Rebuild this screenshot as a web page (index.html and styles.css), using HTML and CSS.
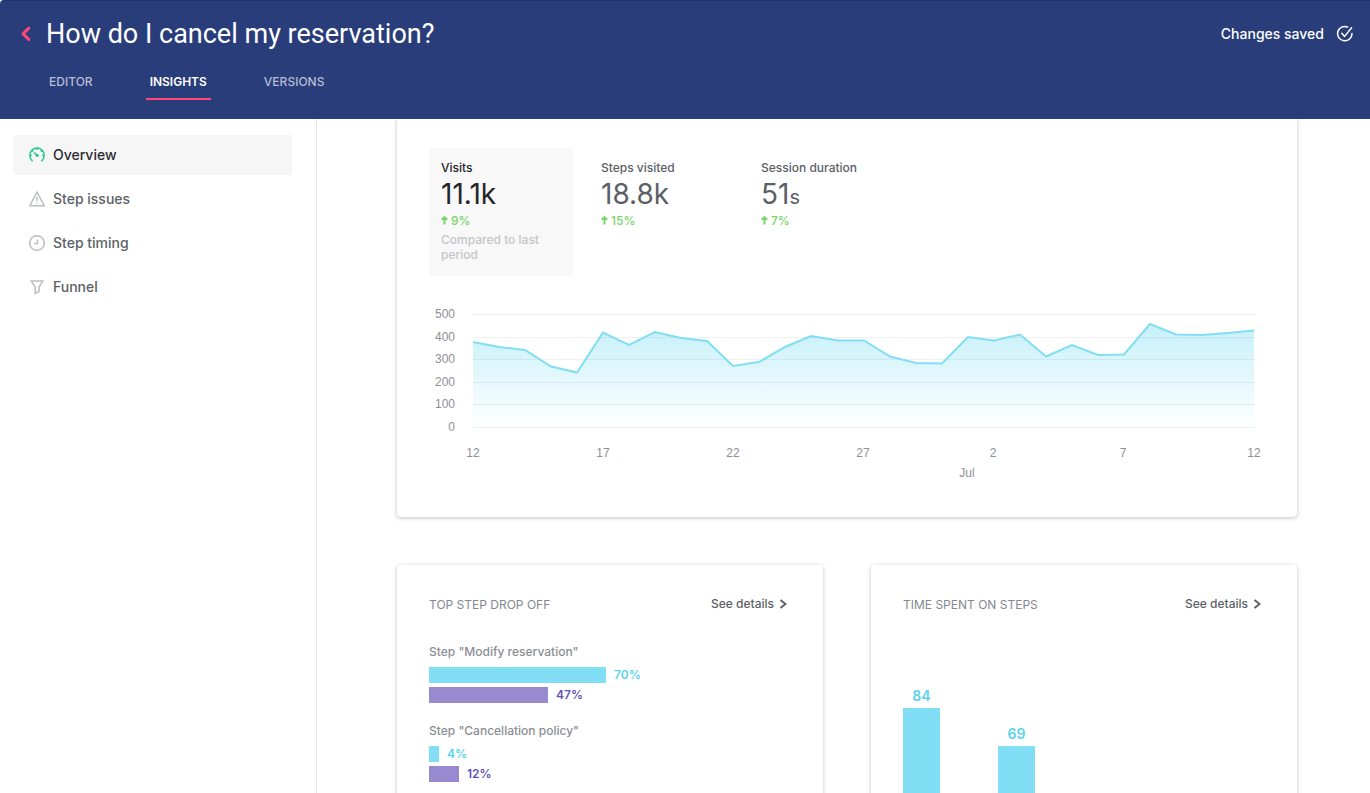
FILE: index.html
```html
<!DOCTYPE html>
<html lang="en">
<head>
<meta charset="utf-8">
<title>How do I cancel my reservation?</title>
<link rel="stylesheet" href="styles.css">
</head>
<body>
<header class="header">
  <div class="title-row">
    <a class="back" href="#" aria-label="Back">
      <svg width="12" height="18" viewBox="0 0 12 18"><path d="M8.800 3.200 3 8.800l5.800 5.600"/></svg>
    </a>
    <h1 class="title">How do I cancel my reservation?</h1>
    <div class="status">
      <span>Changes saved</span>
      <svg width="18" height="18" viewBox="0 0 18 18"><path d="M11.600 2A7.200 7.200 0 1 0 16 8.600"/><path d="M5.800 8.200 8.600 11.400 15.600 2.800"/></svg>
    </div>
  </div>
  <nav class="tabs">
    <a class="tab" href="#">EDITOR</a>
    <a class="tab tab-active" href="#">INSIGHTS</a>
    <a class="tab" href="#">VERSIONS</a>
  </nav>
</header>
<div class="body">
  <nav class="sidebar">
    <a class="item item-active" href="#">
      <svg width="16" height="16" viewBox="0 0 16 16"><path d="M3.600 14.200 2.600 13A7.200 7.200 0 1 1 13.400 13L12.400 14.200M8 1v2M1 8.500h1.800M13.200 8.500H15M3.200 3.600l1 1M12.800 3.600l-1 1"/><path d="M5 5.400 8.400 8.600"/><circle class="dot" cx="8.200" cy="8.500" r="1.600"/></svg>
      <span>Overview</span>
    </a>
    <a class="item" href="#">
      <svg width="16" height="16" viewBox="0 0 16 16"><path d="M8 1.200 15.300 14.800H.7ZM8 6v4M8 11.600v1.200"/></svg>
      <span>Step issues</span>
    </a>
    <a class="item" href="#">
      <svg width="16" height="16" viewBox="0 0 16 16"><circle cx="8" cy="8" r="7.300"/><path d="M8.500 4.800V8.600H5"/></svg>
      <span>Step timing</span>
    </a>
    <a class="item" href="#">
      <svg width="16" height="16" viewBox="0 0 16 16"><path d="M2.200 2H13.800L10 8.200V12.600L6.200 14.300V8.200Z"/></svg>
      <span>Funnel</span>
    </a>
  </nav>
  <main class="main">
    <section class="card card-top">
      <div class="metrics">
        <button class="metric metric-active">
          <span class="metric-name">Visits</span>
          <span class="metric-value">11.1k</span>
          <span class="change"><svg width="7" height="9" viewBox="0 0 7 9"><path d="M3.500 8.500V2M.8 3.800 3.500 1.200 6.200 3.800"/></svg>9%</span>
          <span class="note">Compared to last period</span>
        </button>
        <button class="metric">
          <span class="metric-name">Steps visited</span>
          <span class="metric-value">18.8k</span>
          <span class="change"><svg width="7" height="9" viewBox="0 0 7 9"><path d="M3.500 8.500V2M.8 3.800 3.500 1.200 6.200 3.800"/></svg>15%</span>
        </button>
        <button class="metric">
          <span class="metric-name">Session duration</span>
          <span class="metric-value">51<small class="unit">s</small></span>
          <span class="change"><svg width="7" height="9" viewBox="0 0 7 9"><path d="M3.500 8.500V2M.8 3.800 3.500 1.200 6.200 3.800"/></svg>7%</span>
        </button>
      </div>
      <svg class="chart" viewBox="0 0 836 185" role="img" aria-label="Visits per day">
        <defs>
          <linearGradient id="fade" x1="0" y1="0" x2="0" y2="1">
            <stop offset="0" stop-color="#81def3" stop-opacity=".45"/>
            <stop offset="1" stop-color="#81def3" stop-opacity="0"/>
          </linearGradient>
        </defs>
        <path fill="url(#fade)" d="M44 42L70 47L96 50L122 66.500L148 72.500L174 32.500L200 45L226 32L252 38L278 41L304 66L330 62L356 47L382 36L409 40.500L435 40.500L461 56.500L487 63L513 63.500L539 37L565 40.500L591 34.500L617 56.500L643 45L669 55L695 54.500L721 24L747 34.500L773 35L799 33L825 30.500V127.500H44Z"/>
        <path class="grid" d="M44 14.500H826M44 37.500H826M44 59.500H826M44 82.500H826M44 104.500H826M44 127.500H826"/>
        <path class="line" d="M44 42L70 47L96 50L122 66.500L148 72.500L174 32.500L200 45L226 32L252 38L278 41L304 66L330 62L356 47L382 36L409 40.500L435 40.500L461 56.500L487 63L513 63.500L539 37L565 40.500L591 34.500L617 56.500L643 45L669 55L695 54.500L721 24L747 34.500L773 35L799 33L825 30.500"/>
        <g class="axis axis-y">
          <text x="26" y="18">500</text><text x="26" y="41">400</text><text x="26" y="63">300</text>
          <text x="26" y="86">200</text><text x="26" y="108">100</text><text x="26" y="131">0</text>
        </g>
        <g class="axis axis-x">
          <text x="44" y="157">12</text><text x="174" y="157">17</text><text x="304" y="157">22</text><text x="434" y="157">27</text>
          <text x="564" y="157">2</text><text x="694" y="157">7</text><text x="825" y="157">12</text><text x="538" y="177">Jul</text>
        </g>
      </svg>
    </section>
    <div class="pair">
      <section class="card">
        <div class="card-head">
          <h2 class="card-title">TOP STEP DROP OFF</h2>
          <a class="details" href="#">See details <svg width="8" height="10" viewBox="0 0 8 10"><path d="M1.500 1 6.500 5 1.500 9"/></svg></a>
        </div>
        <div class="step">
          <p class="step-name">Step "Modify reservation"</p>
          <div class="bar-row blue"><span class="bar" style="width:177px"></span>70%</div>
          <div class="bar-row purple"><span class="bar" style="width:119px"></span>47%</div>
        </div>
        <div class="step">
          <p class="step-name">Step "Cancellation policy"</p>
          <div class="bar-row blue"><span class="bar" style="width:10px"></span>4%</div>
          <div class="bar-row purple"><span class="bar" style="width:30px"></span>12%</div>
        </div>
      </section>
      <section class="card">
        <div class="card-head">
          <h2 class="card-title">TIME SPENT ON STEPS</h2>
          <a class="details" href="#">See details <svg width="8" height="10" viewBox="0 0 8 10"><path d="M1.500 1 6.500 5 1.500 9"/></svg></a>
        </div>
        <div class="columns">
          <div class="column">84<span class="column-bar" style="height:210px"></span></div>
          <div class="column">69<span class="column-bar" style="height:172px"></span></div>
        </div>
      </section>
    </div>
  </main>
</div>
</body>
</html>
```

FILE: styles.css
```css
* { box-sizing: border-box; }
html, body { height: 100%; }
body {
  margin: 0;
  display: flex;
  flex-direction: column;
  overflow: hidden;
  background: #fff;
  color: #5c5f66;
  font-family: Inter, "Liberation Sans", sans-serif;
  font-size: 12px;
  font-weight: 500;
}
a { color: inherit; text-decoration: none; }
svg { flex: none; fill: none; stroke: currentColor; }

.header {
  flex: none;
  height: 119px;
  background: #293d7a;
  color: #fff;
  border-top: 1px solid #22336b;
  border-top-left-radius: 4px;
}
.title-row { display: flex; align-items: center; height: 65px; padding: 0 16px 0 20px; }
.back { display: flex; width: 26px; color: #ff4777; }
.back svg { stroke-width: 3; stroke-linecap: round; stroke-linejoin: round; }
.title { flex: 1; margin: 0; font-family: Roboto, sans-serif; font-size: 27px; line-height: 36px; font-weight: 400; }
.status { display: flex; align-items: center; gap: 12px; font-size: 14px; line-height: 16px; }
.status svg { stroke-width: 1.5; stroke-linecap: round; stroke-linejoin: round; }
.tabs { display: flex; gap: 49px; padding-left: 45px; }
.tab {
  padding: 4px 4px 0;
  height: 34px;
  line-height: 24px;
  color: #b4bcd3;
  border-bottom: 2px solid transparent;
}
.tab-active { color: #fff; font-weight: 600; border-color: #ff4777; }

.body { flex: 1; display: flex; min-height: 0; }
.sidebar {
  flex: none;
  width: 317px;
  padding: 16px 24px 0 13px;
  border-right: 1px solid #e4e5e7;
  display: flex;
  flex-direction: column;
  gap: 4px;
}
.item {
  display: flex;
  align-items: center;
  gap: 8px;
  height: 40px;
  padding-left: 16px;
  font-size: 14px;
  line-height: 16px;
  border-radius: 4px 0 0 4px;
}
.item svg { color: #bcbec3; stroke-width: 1.5; }
.item-active { background: #f6f6f6; color: #2b2d33; }
.item-active svg { color: #25cb90; }
.dot { fill: currentColor; stroke: none; }

.main { flex: 1; min-width: 0; padding: 0 73px 0 80px; overflow: hidden; }
.card {
  padding: 32px;
  background: #fff;
  border-radius: 4px;
  box-shadow: 0 1px 4px rgba(0, 0, 0, .25);
}
.card-top { padding-top: 29px; padding-bottom: 32px; border-radius: 0 0 4px 4px; }
.metrics { display: flex; gap: 16px; height: 128px; margin-bottom: 24px; }
.metric {
  display: flex;
  flex-direction: column;
  width: 144px;
  padding: 12px;
  border: 0;
  background: none;
  border-radius: 2px;
  color: inherit;
  font: inherit;
  text-align: left;
}
.metric-active { background: #f8f8f8; color: #23252b; }
.metric-name { line-height: 16px; }
.metric-value { height: 36px; font-size: 28px; line-height: 37px; font-weight: 400; }
.unit { font-size: 20px; line-height: 20px; }
.change { display: flex; align-items: center; gap: 3px; line-height: 18px; color: #79d568; }
.change svg { margin-bottom: 2px; stroke-width: 2; }
.note { margin-top: 2px; line-height: 15px; color: #c4c5c8; }

.chart { display: block; width: 100%; }
.chart path { stroke: none; }
.chart .grid { stroke: #5c6f7a; stroke-opacity: .1; }
.chart .line { stroke: #81def3; stroke-width: 2; }
.axis { fill: #8d9097; stroke: none; font: 12px "Liberation Sans", Arial, sans-serif; }
.axis-y { text-anchor: end; }
.axis-x { text-anchor: middle; }

.pair { display: grid; grid-template-columns: 1fr 1fr; gap: 48px; margin-top: 48px; }
.pair .card { height: 400px; }
.card-head { display: flex; justify-content: space-between; height: 16px; margin-bottom: 30px; }
.card-title { margin: 0; font-size: 12px; line-height: 16px; font-weight: 400; color: #85888f; }
.details { display: flex; align-items: center; gap: 5px; padding-right: 4px; line-height: 14px; height: 14px; }
.details svg { stroke-width: 2; }
.step { margin-bottom: 19px; }
.step-name { margin: 0 0 6px; line-height: 18px; color: #8b8d93; }
.bar-row { display: flex; gap: 8px; height: 16px; margin-bottom: 4px; line-height: 15px; font-weight: 600; }
.bar { height: 16px; }
.blue { color: #58d3ee; }
.blue .bar, .column-bar { background: #82def4; }
.purple { color: #6550b9; }
.purple .bar { background: #978ad1; }
.columns { display: flex; align-items: flex-end; gap: 58px; height: 240px; margin-top: 65px; }
.column { width: 37px; text-align: center; font-size: 14px; line-height: 24px; font-weight: 600; color: #58d3ee; }
.column-bar { display: block; }
```
